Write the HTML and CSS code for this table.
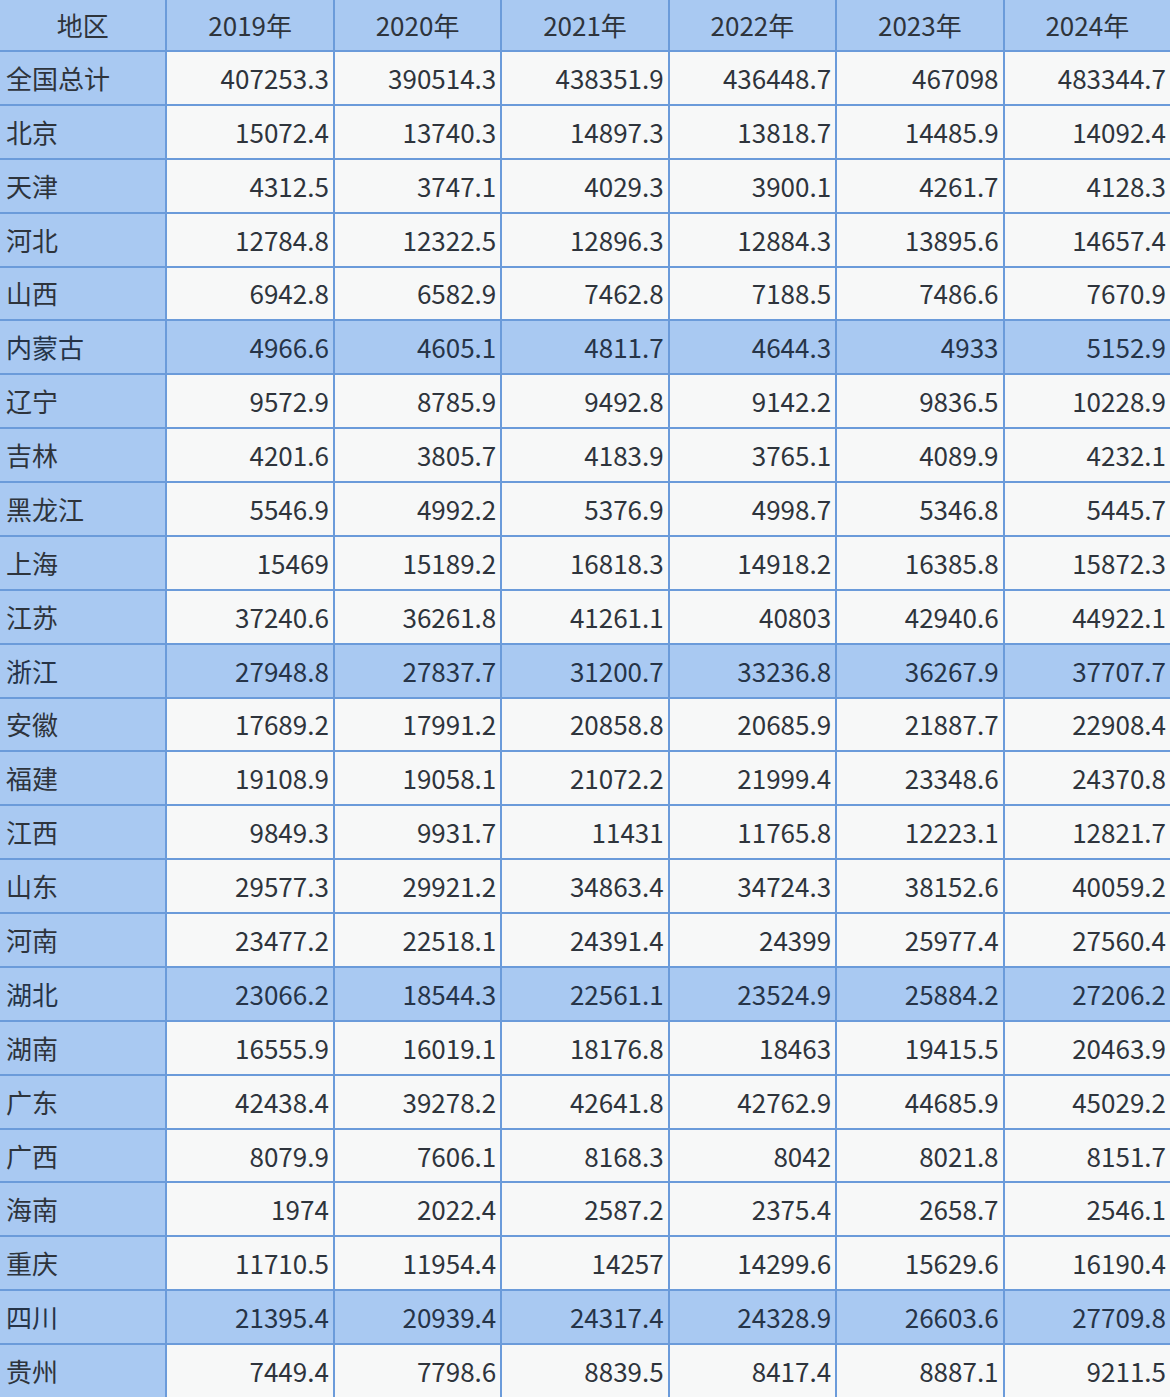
FILE: index.html
```html
<!DOCTYPE html>
<html lang="zh">
<head>
<meta charset="utf-8">
<link rel="stylesheet" href="styles.css">
<title>地区数据</title>
</head>
<body>
<div class="grid">
  <div class="row head"><div class="c">地区</div><div class="c">2019年</div><div class="c">2020年</div><div class="c">2021年</div><div class="c">2022年</div><div class="c">2023年</div><div class="c">2024年</div></div>
  <div class="row"><div class="c">全国总计</div><div class="c">407253.3</div><div class="c">390514.3</div><div class="c">438351.9</div><div class="c">436448.7</div><div class="c">467098</div><div class="c">483344.7</div></div>
  <div class="row"><div class="c">北京</div><div class="c">15072.4</div><div class="c">13740.3</div><div class="c">14897.3</div><div class="c">13818.7</div><div class="c">14485.9</div><div class="c">14092.4</div></div>
  <div class="row"><div class="c">天津</div><div class="c">4312.5</div><div class="c">3747.1</div><div class="c">4029.3</div><div class="c">3900.1</div><div class="c">4261.7</div><div class="c">4128.3</div></div>
  <div class="row"><div class="c">河北</div><div class="c">12784.8</div><div class="c">12322.5</div><div class="c">12896.3</div><div class="c">12884.3</div><div class="c">13895.6</div><div class="c">14657.4</div></div>
  <div class="row"><div class="c">山西</div><div class="c">6942.8</div><div class="c">6582.9</div><div class="c">7462.8</div><div class="c">7188.5</div><div class="c">7486.6</div><div class="c">7670.9</div></div>
  <div class="row hl"><div class="c">内蒙古</div><div class="c">4966.6</div><div class="c">4605.1</div><div class="c">4811.7</div><div class="c">4644.3</div><div class="c">4933</div><div class="c">5152.9</div></div>
  <div class="row"><div class="c">辽宁</div><div class="c">9572.9</div><div class="c">8785.9</div><div class="c">9492.8</div><div class="c">9142.2</div><div class="c">9836.5</div><div class="c">10228.9</div></div>
  <div class="row"><div class="c">吉林</div><div class="c">4201.6</div><div class="c">3805.7</div><div class="c">4183.9</div><div class="c">3765.1</div><div class="c">4089.9</div><div class="c">4232.1</div></div>
  <div class="row"><div class="c">黑龙江</div><div class="c">5546.9</div><div class="c">4992.2</div><div class="c">5376.9</div><div class="c">4998.7</div><div class="c">5346.8</div><div class="c">5445.7</div></div>
  <div class="row"><div class="c">上海</div><div class="c">15469</div><div class="c">15189.2</div><div class="c">16818.3</div><div class="c">14918.2</div><div class="c">16385.8</div><div class="c">15872.3</div></div>
  <div class="row"><div class="c">江苏</div><div class="c">37240.6</div><div class="c">36261.8</div><div class="c">41261.1</div><div class="c">40803</div><div class="c">42940.6</div><div class="c">44922.1</div></div>
  <div class="row hl"><div class="c">浙江</div><div class="c">27948.8</div><div class="c">27837.7</div><div class="c">31200.7</div><div class="c">33236.8</div><div class="c">36267.9</div><div class="c">37707.7</div></div>
  <div class="row"><div class="c">安徽</div><div class="c">17689.2</div><div class="c">17991.2</div><div class="c">20858.8</div><div class="c">20685.9</div><div class="c">21887.7</div><div class="c">22908.4</div></div>
  <div class="row"><div class="c">福建</div><div class="c">19108.9</div><div class="c">19058.1</div><div class="c">21072.2</div><div class="c">21999.4</div><div class="c">23348.6</div><div class="c">24370.8</div></div>
  <div class="row"><div class="c">江西</div><div class="c">9849.3</div><div class="c">9931.7</div><div class="c">11431</div><div class="c">11765.8</div><div class="c">12223.1</div><div class="c">12821.7</div></div>
  <div class="row"><div class="c">山东</div><div class="c">29577.3</div><div class="c">29921.2</div><div class="c">34863.4</div><div class="c">34724.3</div><div class="c">38152.6</div><div class="c">40059.2</div></div>
  <div class="row"><div class="c">河南</div><div class="c">23477.2</div><div class="c">22518.1</div><div class="c">24391.4</div><div class="c">24399</div><div class="c">25977.4</div><div class="c">27560.4</div></div>
  <div class="row hl"><div class="c">湖北</div><div class="c">23066.2</div><div class="c">18544.3</div><div class="c">22561.1</div><div class="c">23524.9</div><div class="c">25884.2</div><div class="c">27206.2</div></div>
  <div class="row"><div class="c">湖南</div><div class="c">16555.9</div><div class="c">16019.1</div><div class="c">18176.8</div><div class="c">18463</div><div class="c">19415.5</div><div class="c">20463.9</div></div>
  <div class="row"><div class="c">广东</div><div class="c">42438.4</div><div class="c">39278.2</div><div class="c">42641.8</div><div class="c">42762.9</div><div class="c">44685.9</div><div class="c">45029.2</div></div>
  <div class="row"><div class="c">广西</div><div class="c">8079.9</div><div class="c">7606.1</div><div class="c">8168.3</div><div class="c">8042</div><div class="c">8021.8</div><div class="c">8151.7</div></div>
  <div class="row"><div class="c">海南</div><div class="c">1974</div><div class="c">2022.4</div><div class="c">2587.2</div><div class="c">2375.4</div><div class="c">2658.7</div><div class="c">2546.1</div></div>
  <div class="row"><div class="c">重庆</div><div class="c">11710.5</div><div class="c">11954.4</div><div class="c">14257</div><div class="c">14299.6</div><div class="c">15629.6</div><div class="c">16190.4</div></div>
  <div class="row hl"><div class="c">四川</div><div class="c">21395.4</div><div class="c">20939.4</div><div class="c">24317.4</div><div class="c">24328.9</div><div class="c">26603.6</div><div class="c">27709.8</div></div>
  <div class="row"><div class="c">贵州</div><div class="c">7449.4</div><div class="c">7798.6</div><div class="c">8839.5</div><div class="c">8417.4</div><div class="c">8887.1</div><div class="c">9211.5</div></div>
</div>
</body>
</html>
```

FILE: styles.css
```css
html, body {
  margin: 0;
  padding: 0;
  background: #f7f8f8;
}

.grid {
  width: 1170px;
  height: 1397px;
  display: grid;
  grid-template-columns: repeat(7, 1fr);
  grid-template-rows: 50px repeat(25, 1fr);
  gap: 2px;
  background: #6b9bda;
  overflow: hidden;
  font-family: "Noto Sans CJK SC", "Noto Sans", sans-serif;
  font-size: 26px;
  color: #2e343c;
}

.row {
  display: contents;
}

.c {
  background: #f7f8f8;
  display: flex;
  align-items: center;
  justify-content: flex-end;
  padding: 0 4px 0 6px;
  line-height: 1;
  white-space: nowrap;
}

.c:first-child {
  background: #a9c9f2;
  justify-content: flex-start;
  padding-left: 6px;
}

.head .c {
  background: #a9c9f2;
  justify-content: center;
  padding: 0 4px;
}

.hl .c {
  background: #a9c9f2;
  color: #263448;
}
```
